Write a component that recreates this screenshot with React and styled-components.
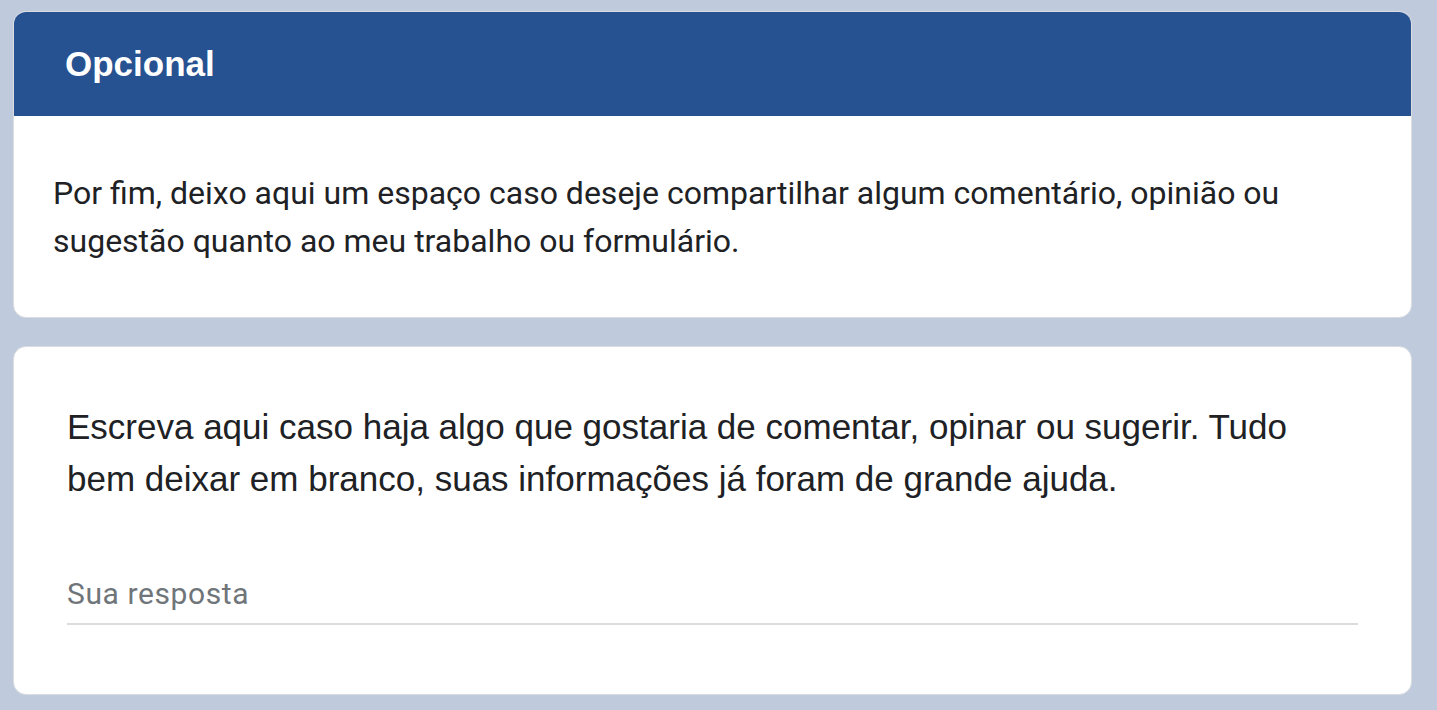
import React from 'react';
import styled, { createGlobalStyle } from 'styled-components';

const GlobalStyle = createGlobalStyle`
  html, body {
    margin: 0;
    padding: 0;
    background: #bfcbdd;
  }
  body {
    font-family: Roboto, 'Noto Sans', sans-serif;
  }
`;

const Page = styled.div`
  display: flex;
  flex-direction: column;
  gap: 28px;
  padding: 11px 25px 16px 13px;
  min-height: 710px;
  box-sizing: border-box;
`;

const Card = styled.section`
  background: #fff;
  border: 1px solid #dadce0;
  border-radius: 13px;
  overflow: hidden;
`;

const SectionHeader = styled.div`
  background: #275291;
  height: 105px;
  margin: -1px -1px 0;
  display: flex;
  align-items: center;
  padding: 0 52px;
`;

const SectionTitle = styled.h2`
  margin: 0;
  color: #fff;
  font-family: 'Liberation Sans', Arial, sans-serif;
  font-weight: 700;
  font-size: 35px;
  letter-spacing: 0;
`;

const Description = styled.p`
  margin: 0;
  padding: 53px 39px 52px;
  color: #202124;
  font-family: Roboto, sans-serif;
  font-size: 32px;
  line-height: 48px;
`;

const QuestionBody = styled.div`
  padding: 54px 53px 69px 53px;
`;

const QuestionText = styled.div`
  color: #202124;
  font-family: 'Liberation Sans', Arial, sans-serif;
  font-size: 35px;
  line-height: 52px;
  padding-right: 40px;
`;

const AnswerField = styled.div`
  margin-top: 71px;
  border-bottom: 2px solid #dadce0;
  padding-bottom: 11px;
  color: #70757a;
  font-family: Roboto, sans-serif;
  font-size: 30px;
  letter-spacing: 0.6px;
  line-height: 36px;
`;

export default function App() {
  return (
    <>
      <GlobalStyle />
      <Page>
        <Card>
          <SectionHeader>
            <SectionTitle>Opcional</SectionTitle>
          </SectionHeader>
          <Description>
            Por fim, deixo aqui um espaço caso deseje compartilhar algum comentário, opinião ou sugestão quanto ao meu trabalho ou formulário.
          </Description>
        </Card>
        <Card>
          <QuestionBody>
            <QuestionText>
              Escreva aqui caso haja algo que gostaria de comentar, opinar ou sugerir. Tudo bem deixar em branco, suas informações já foram de grande ajuda.
            </QuestionText>
            <AnswerField>Sua resposta</AnswerField>
          </QuestionBody>
        </Card>
      </Page>
    </>
  );
}
